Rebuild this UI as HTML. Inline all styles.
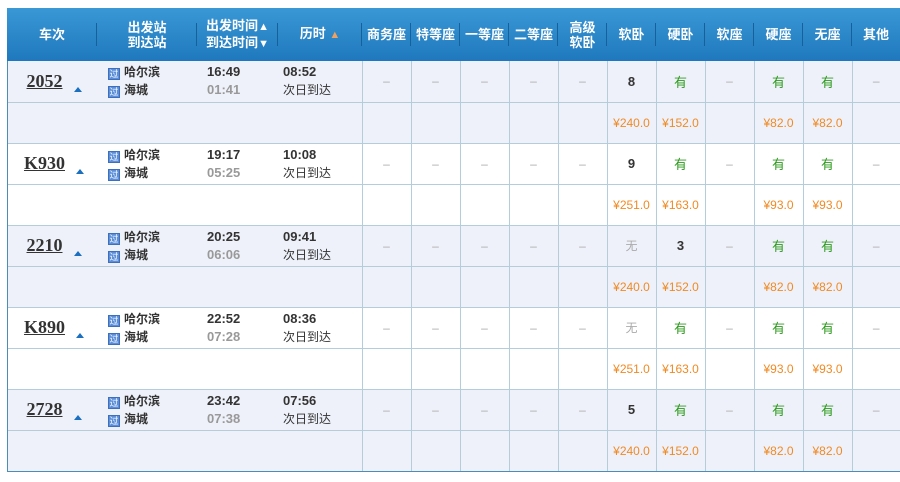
<!DOCTYPE html>
<html><head><meta charset="utf-8"><style>
*{margin:0;padding:0;box-sizing:border-box}
body{width:900px;height:482px;background:#fff;font-family:"Liberation Sans","Noto Sans CJK SC",sans-serif;position:relative;overflow:hidden}
table{position:absolute;left:7px;top:8px;border-collapse:collapse;table-layout:fixed;width:893px}
th{height:53px;background:linear-gradient(#3a98d6,#1f78bd);color:#fff;font-size:13px;font-weight:bold;line-height:15px;position:relative;text-align:center;white-space:nowrap}
th:not(:last-child)::after{content:"";position:absolute;right:0;top:15px;height:23px;border-right:1px solid #17609a}
th small{font-size:11px}
td{height:41px;border-bottom:1px solid #b3cddb;font-size:12px;text-align:center;color:#aaa;vertical-align:middle;white-space:nowrap}
td.v{border-left:1px solid #b3cddb}
tr.a td{background:#eef1f9}
tr.b td{background:#fff}
.tn{font-family:"Liberation Serif",serif;font-weight:bold;font-size:18px;color:#333;text-decoration:underline;margin-left:4px}
.tri{display:inline-block;width:0;height:0;border-left:4px solid transparent;border-right:4px solid transparent;border-bottom:5px solid #1a6fc0;margin-left:11px;vertical-align:-5px}
.st{text-align:left;padding-left:11px;color:#333;font-weight:bold;font-size:12px;line-height:18px}
.g{display:inline-block;width:12px;height:12px;background:#5c8fd8;color:#fff;font-size:9px;line-height:11px;text-align:center;margin-right:4px;vertical-align:-1px;font-weight:normal;border:1px solid #3d6fc0}
.tm{text-align:left;padding-left:10px;font-weight:bold;font-size:13px;line-height:18px;color:#333}
.tm span{color:#999}
.du{text-align:left;padding-left:5px;font-size:12px;line-height:18px;color:#333}
.du b{font-size:13px}
.y{color:#2d9b1d;font-size:13px}
.n{color:#333;font-weight:bold;font-size:13px}
.p{color:#f08a24;font-size:12px}
tr.last td{border-bottom:1px solid #4a8db6}
</style></head><body>
<table>
<colgroup><col style="width:90px"><col style="width:100px"><col style="width:81px"><col style="width:84px"><col style="width:49px"><col style="width:49px"><col style="width:49px"><col style="width:49px"><col style="width:49px"><col style="width:49px"><col style="width:49px"><col style="width:49px"><col style="width:49px"><col style="width:49px"><col style="width:48px"></colgroup>
<tr><th>车次</th><th>出发站<br>到达站</th><th>出发时间<small>▲</small><br>到达时间<small>▼</small></th><th>历时 <small style="color:#f0a060">▲</small></th><th>商务座</th><th>特等座</th><th>一等座</th><th>二等座</th><th>高级<br>软卧</th><th>软卧</th><th>硬卧</th><th>软座</th><th>硬座</th><th>无座</th><th>其他</th></tr>

<tr class="a"><td><span class="tn">2052</span><span class="tri"></span></td><td class="st"><span class="g">过</span>哈尔滨<br><span class="g">过</span>海城</td><td class="tm">16:49<br><span>01:41</span></td><td class="du"><b>08:52</b><br>次日到达</td><td class="v">–</td><td class="v">–</td><td class="v">–</td><td class="v">–</td><td class="v">–</td><td class="v n">8</td><td class="v y">有</td><td class="v">–</td><td class="v y">有</td><td class="v y">有</td><td class="v">–</td></tr>
<tr class="a"><td></td><td></td><td></td><td></td><td class="v"></td><td class="v"></td><td class="v"></td><td class="v"></td><td class="v"></td><td class="v p">¥240.0</td><td class="v p">¥152.0</td><td class="v"></td><td class="v p">¥82.0</td><td class="v p">¥82.0</td><td class="v"></td></tr>

<tr class="b"><td><span class="tn">K930</span><span class="tri"></span></td><td class="st"><span class="g">过</span>哈尔滨<br><span class="g">过</span>海城</td><td class="tm">19:17<br><span>05:25</span></td><td class="du"><b>10:08</b><br>次日到达</td><td class="v">–</td><td class="v">–</td><td class="v">–</td><td class="v">–</td><td class="v">–</td><td class="v n">9</td><td class="v y">有</td><td class="v">–</td><td class="v y">有</td><td class="v y">有</td><td class="v">–</td></tr>
<tr class="b"><td></td><td></td><td></td><td></td><td class="v"></td><td class="v"></td><td class="v"></td><td class="v"></td><td class="v"></td><td class="v p">¥251.0</td><td class="v p">¥163.0</td><td class="v"></td><td class="v p">¥93.0</td><td class="v p">¥93.0</td><td class="v"></td></tr>

<tr class="a"><td><span class="tn">2210</span><span class="tri"></span></td><td class="st"><span class="g">过</span>哈尔滨<br><span class="g">过</span>海城</td><td class="tm">20:25<br><span>06:06</span></td><td class="du"><b>09:41</b><br>次日到达</td><td class="v">–</td><td class="v">–</td><td class="v">–</td><td class="v">–</td><td class="v">–</td><td class="v">无</td><td class="v n">3</td><td class="v">–</td><td class="v y">有</td><td class="v y">有</td><td class="v">–</td></tr>
<tr class="a"><td></td><td></td><td></td><td></td><td class="v"></td><td class="v"></td><td class="v"></td><td class="v"></td><td class="v"></td><td class="v p">¥240.0</td><td class="v p">¥152.0</td><td class="v"></td><td class="v p">¥82.0</td><td class="v p">¥82.0</td><td class="v"></td></tr>

<tr class="b"><td><span class="tn">K890</span><span class="tri"></span></td><td class="st"><span class="g">过</span>哈尔滨<br><span class="g">过</span>海城</td><td class="tm">22:52<br><span>07:28</span></td><td class="du"><b>08:36</b><br>次日到达</td><td class="v">–</td><td class="v">–</td><td class="v">–</td><td class="v">–</td><td class="v">–</td><td class="v">无</td><td class="v y">有</td><td class="v">–</td><td class="v y">有</td><td class="v y">有</td><td class="v">–</td></tr>
<tr class="b"><td></td><td></td><td></td><td></td><td class="v"></td><td class="v"></td><td class="v"></td><td class="v"></td><td class="v"></td><td class="v p">¥251.0</td><td class="v p">¥163.0</td><td class="v"></td><td class="v p">¥93.0</td><td class="v p">¥93.0</td><td class="v"></td></tr>

<tr class="a"><td><span class="tn">2728</span><span class="tri"></span></td><td class="st"><span class="g">过</span>哈尔滨<br><span class="g">过</span>海城</td><td class="tm">23:42<br><span>07:38</span></td><td class="du"><b>07:56</b><br>次日到达</td><td class="v">–</td><td class="v">–</td><td class="v">–</td><td class="v">–</td><td class="v">–</td><td class="v n">5</td><td class="v y">有</td><td class="v">–</td><td class="v y">有</td><td class="v y">有</td><td class="v">–</td></tr>
<tr class="a last"><td></td><td></td><td></td><td></td><td class="v"></td><td class="v"></td><td class="v"></td><td class="v"></td><td class="v"></td><td class="v p">¥240.0</td><td class="v p">¥152.0</td><td class="v"></td><td class="v p">¥82.0</td><td class="v p">¥82.0</td><td class="v"></td></tr>
</table>
<div style="position:absolute;left:7px;top:61px;width:1px;height:411px;background:#4a8db6"></div>
</body></html>
